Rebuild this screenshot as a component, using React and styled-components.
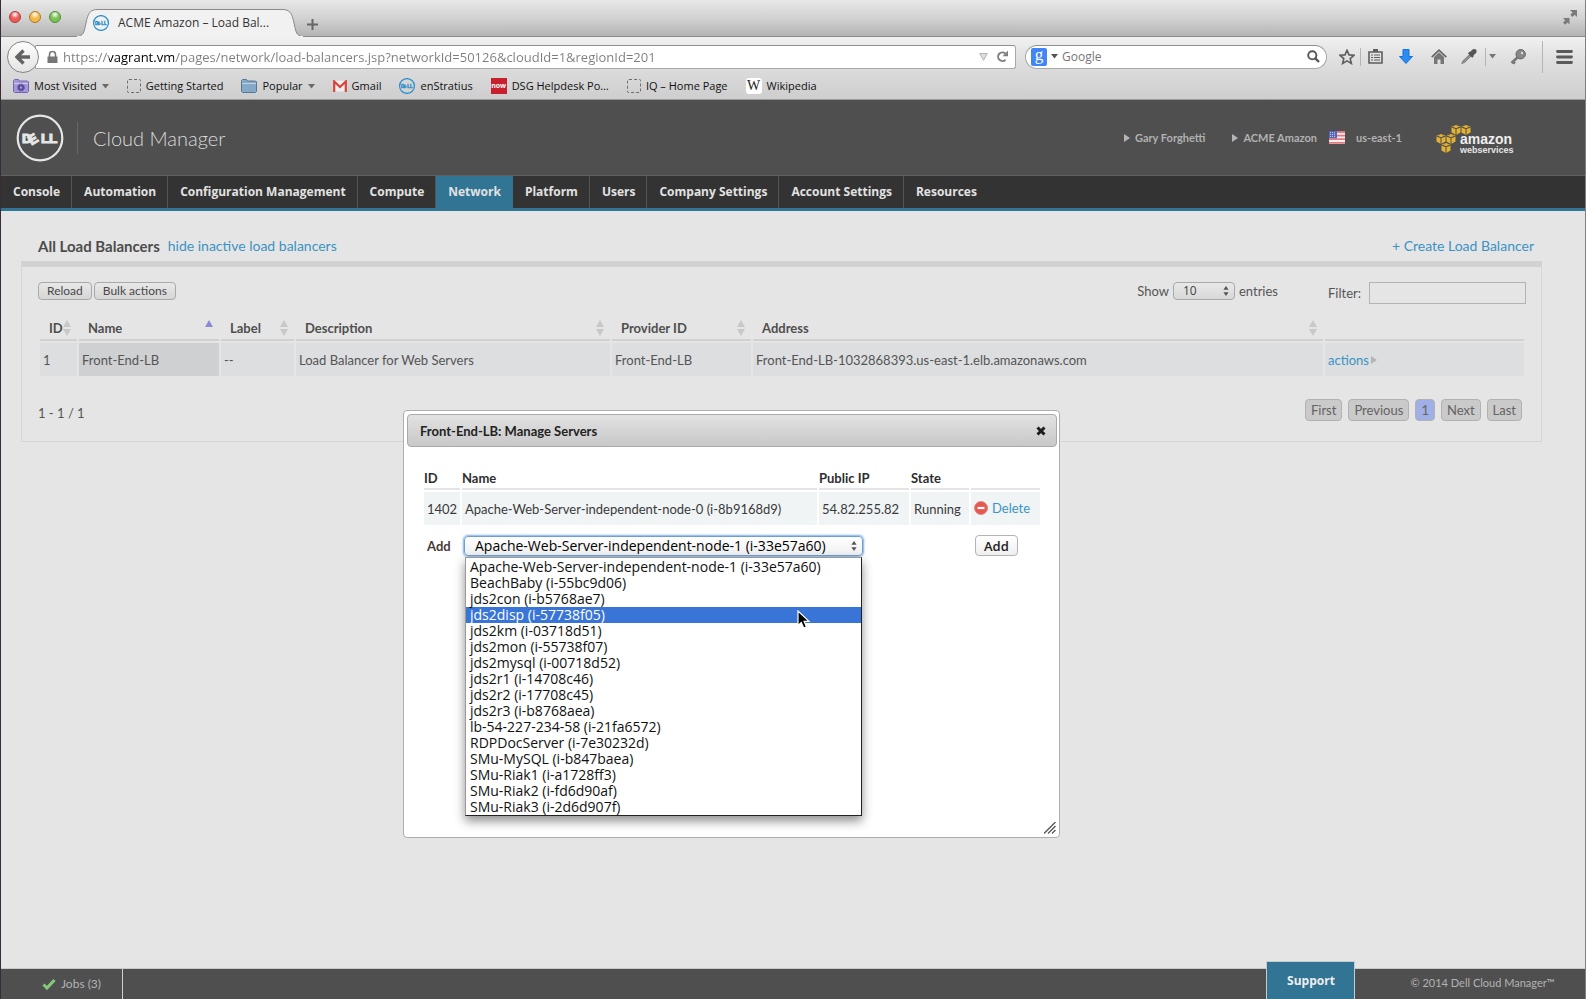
import React from 'react';
import styled, { createGlobalStyle, css } from 'styled-components';

const UI = '"Open Sans", "Noto Sans", sans-serif';
const BODY = 'Lato, "Open Sans", sans-serif';

const GlobalStyle = createGlobalStyle`
  *, *::before, *::after { box-sizing: border-box; }
  body { margin: 0; background: #e5e5e5; font: 13px/18px ${BODY}; color: #555; }
  button, input, select { font: inherit; color: inherit; margin: 0; }
  a { color: #3b93c4; text-decoration: none; }
`;

const Window = styled.div`
  display: flex;
  flex-direction: column;
  min-height: 100vh;
  position: relative;
  border-left: 1px solid #3a2a3a;
  border-right: 1px solid #808080;
`;

/* ---------- browser chrome ---------- */

const TabStrip = styled.header`
  display: flex;
  align-items: flex-end;
  height: 37px;
  background: linear-gradient(#e8e8e8, #d2d2d2 50%, #b4b4b4);
  border-bottom: 1px solid #8a8a8a;
  font-family: ${UI};
`;

const Lights = styled.div`
  display: flex;
  gap: 8px;
  align-self: center;
  padding: 0 15px 3px 8px;
`;

const Light = styled.button`
  width: 12px;
  height: 12px;
  padding: 0;
  border-radius: 50%;
  border: 1px solid ${(p) => p.$edge};
  background: radial-gradient(circle at 50% 25%, #fff 0, ${(p) => p.$fill} 45%, ${(p) => p.$fill} 100%);
`;

const Tab = styled.div`
  display: flex;
  align-items: center;
  gap: 10px;
  position: relative;
  width: 228px;
  height: 28px;
  margin-bottom: -1px;
  padding-left: 17px;
  color: #333;
  font-size: 12px;
`;

const TabShape = styled.svg`
  position: absolute;
  left: 0;
  top: 0;
  z-index: 0;
`;

const TabText = styled.span`
  position: relative;
  display: flex;
  align-items: center;
  gap: 9px;
`;

const IconButton = styled.button`
  display: flex;
  align-items: center;
  justify-content: center;
  padding: 0;
  border: 0;
  background: none;
  width: ${(p) => p.$w || 20}px;
  height: ${(p) => p.$h || 24}px;
`;

const StripEnd = styled.div`
  margin-left: auto;
  align-self: center;
  padding: 0 7px 2px 0;
`;

const Chrome = styled.div`
  background: linear-gradient(#f1f1f1, #e0e0e0 35%, #cecece);
  border-bottom: 1px solid #9b9b9b;
  font-family: ${UI};
  height: 63px;
`;

const AddressRow = styled.form`
  display: flex;
  align-items: center;
  height: 39px;
  padding: 0 4px 0 6px;
`;

const Back = styled.button`
  width: 32px;
  height: 32px;
  flex: none;
  position: relative;
  display: flex;
  align-items: center;
  justify-content: center;
  padding: 0;
  border: 1px solid #858585;
  border-radius: 50%;
  background: linear-gradient(#fdfdfd, #e4e4e4);
`;

const Field = styled.div`
  display: flex;
  align-items: center;
  height: 24px;
  background: #fff;
  border: 1px solid #a9a9a9;
  border-top-color: #8f8f8f;
`;

const UrlField = styled(Field)`
  flex: 1;
  min-width: 0;
  margin-left: -4px;
  padding: 0 4px 0 11px;
  gap: 5px;
  border-radius: 0 3px 3px 0;
`;

const UrlInput = styled.input`
  flex: 1;
  min-width: 0;
  height: 22px;
  border: 0;
  padding: 0;
  outline: 0;
  font-size: 13px;
  color: transparent;
  background: linear-gradient(to right, #7d7d7d 46px, #000 46px, #000 111px, #7d7d7d 111px);
  background-clip: text;
  -webkit-background-clip: text;
`;

const SearchField = styled(Field)`
  width: 302px;
  margin-left: 9px;
  padding: 0 5px;
  gap: 4px;
  border-radius: 12px;
`;

const SearchInput = styled.input`
  flex: 1;
  min-width: 0;
  border: 0;
  padding: 0;
  outline: 0;
  background: none;
  font-size: 12px;
  &::placeholder { color: #777; opacity: 1; }
`;

const GoogleMark = styled.span`
  display: flex;
  align-items: center;
  justify-content: center;
  width: 16px;
  height: 18px;
  border-radius: 2px;
  background: #4285f4;
  color: #fff;
  font: 17px/16px "Liberation Serif", serif;
  padding-bottom: 4px;
`;

const Tools = styled.div`
  display: flex;
  align-items: center;
  margin-left: 9px;
`;

const Divider = styled.span`
  width: 1px;
  height: ${(p) => p.$h || 18}px;
  background: #b5b5b5;
  margin: 0 ${(p) => p.$m || 0}px;
`;

const Bookmarks = styled.nav`
  display: flex;
  align-items: center;
  gap: 18px;
  height: 20px;
  padding-left: 12px;
  font-size: 11px;
  line-height: 16px;
`;

const Bookmark = styled.a`
  display: flex;
  align-items: center;
  gap: 5px;
  color: #111;
  white-space: nowrap;
`;

const SquareMark = styled.span`
  display: flex;
  align-items: center;
  justify-content: center;
  width: 16px;
  height: 16px;
  border-radius: ${(p) => p.$r || 0}px;
  background: ${(p) => p.$bg};
  color: ${(p) => p.$fg};
  font: ${(p) => p.$font};
`;

const Dashed = styled.span`
  width: 14px;
  height: 14px;
  border: 1px dashed #6d6d6d;
  border-radius: 2px;
`;

/* ---------- application ---------- */

const Banner = styled.div`
  display: flex;
  align-items: center;
  height: 75px;
  background: #4f4f4f;
  padding: 0 71px 0 15px;
`;

const Product = styled.h1`
  margin: 0 0 0 13px;
  padding-left: 15px;
  border-left: 1px solid #686868;
  font: 300 20px/32px ${BODY};
  color: #dcdcdc;
`;

const Account = styled.div`
  display: flex;
  align-items: center;
  margin-left: auto;
  font-weight: 700;
  font-size: 11px;
`;

const AccountLink = styled.a`
  display: flex;
  align-items: center;
  gap: ${(p) => p.$inner || 5}px;
  color: #b1b1b1;
  margin-right: ${(p) => p.$gap}px;
  svg { flex: none; }
`;

const MainNav = styled.nav`
  display: flex;
  height: 36px;
  background: #333;
  border-top: 1px solid #606060;
  border-bottom: 3px solid #327494;
`;

const NavItem = styled.a`
  display: flex;
  align-items: center;
  padding: 0 11px 0 12px;
  border-right: 1px solid #555;
  font: 700 12px/18px ${UI};
  color: #e2e2e2;
  white-space: nowrap;
  ${(p) => p.$active && css`background: #327494; border-color: #327494;`}
  &:last-child { border-right: 0; }
`;

const Main = styled.main`
  flex: 1;
  padding: 22px 43px 0 20px;
`;

const Heading = styled.div`
  display: flex;
  align-items: center;
  gap: 8px;
  height: 28px;
  padding: 0 8px 2px 17px;
  font-size: 14px;
`;

const Title = styled.h2`
  margin: 0;
  font-size: 15px;
  line-height: 18px;
  color: #4c4c4c;
`;

const CreateLink = styled.a`
  margin-left: auto;
`;

const Panel = styled.section`
  border: 1px solid #d6d6d6;
  border-top: 6px solid #d2d2d2;
  padding: 15px 15px 20px 16px;
`;

const Toolbar = styled.div`
  display: flex;
  align-items: flex-start;
  height: 22px;
  gap: 2px;
`;

const Button = styled.button`
  height: ${(p) => p.$h || 18}px;
  padding: 0 8px;
  border: 1px solid ${(p) => (p.$light ? '#b3b3b3' : '#a9a9a9')};
  border-radius: 4px;
  background: ${(p) => (p.$light ? 'linear-gradient(#fff, #efefef)' : 'linear-gradient(#e8e8e8, #d6d6d6)')};
  color: ${(p) => (p.$light ? '#222' : '#484848')};
  font-size: ${(p) => (p.$light ? 13 : 12)}px;
  line-height: 16px;
  ${(p) => p.$light && css`font-family: ${UI}; font-weight: 600;`}
`;

const Entries = styled.label`
  display: flex;
  align-items: center;
  gap: 4px;
  margin-left: auto;
  margin-right: 48px;
`;

const Filter = styled.label`
  display: flex;
  align-items: center;
  gap: 8px;
  input {
    width: 157px;
    height: 22px;
    border: 1px solid #b3b3b3;
    background: #e5e5e5;
    padding: 0 4px;
  }
`;

const SelectBox = styled.span`
  position: relative;
  display: block;
  width: ${(p) => p.$w}px;
  select {
    display: block;
    width: 100%;
    height: ${(p) => (p.$focus ? 20 : 18)}px;
    appearance: none;
    outline: 0;
    padding: 0 16px 0 ${(p) => (p.$focus ? 10 : 9)}px;
    font-family: ${UI};
    font-weight: 400;
    font-size: ${(p) => (p.$focus ? 14 : 12)}px;
    line-height: 16px;
    border: 1px solid ${(p) => (p.$focus ? '#6f9fd0' : '#a9a9a9')};
    border-radius: 4px;
    background: ${(p) => (p.$focus ? 'linear-gradient(#fff, #f0f0f0)' : 'linear-gradient(#e8e8e8, #d8d8d8)')};
    color: ${(p) => (p.$focus ? '#000' : '#444')};
    ${(p) => p.$focus && css`box-shadow: 0 0 2px 1px #7fb0e0;`}
  }
`;

const SelectArrows = styled.svg`
  position: absolute;
  right: 6px;
  top: 50%;
  margin-top: -5px;
  pointer-events: none;
`;

const Grid = styled.table`
  width: 100%;
  table-layout: fixed;
  border-collapse: separate;
  border-spacing: 2px;
  margin: ${(p) => p.$margin || '0'};
`;

const Th = styled.th`
  height: ${(p) => p.$h || 25}px;
  padding: 0 6px 0 ${(p) => (p.$pad === undefined ? 9 : p.$pad)}px;
  border-bottom: 2px solid ${(p) => p.$line || '#d0d1d2'};
  text-align: left;
  color: ${(p) => p.$ink || '#4f4f4f'};
`;

const HeadInner = styled.span`
  display: flex;
  align-items: center;
  justify-content: space-between;
`;

const Td = styled.td`
  height: 33px;
  padding: 0 3px;
  background: ${(p) => p.$bg || '#dcdee0'};
  color: ${(p) => p.$ink || '#555'};
  white-space: nowrap;
`;

const ActionLink = styled.a`
  display: inline-flex;
  align-items: center;
  gap: ${(p) => p.$gap || 2}px;
`;

const TableFoot = styled.div`
  display: flex;
  align-items: center;
  justify-content: space-between;
  margin-top: 21px;
  height: 22px;
  padding-right: 4px;
`;

const Count = styled.span`
  padding-top: 6px;
`;

const Pages = styled.div`
  display: flex;
  gap: 6px;
`;

const PageButton = styled.button`
  height: 22px;
  padding: 0 5px;
  border: 1px solid #b2b2b2;
  border-radius: 4px;
  background: ${(p) => (p.$current ? '#a0afe6' : '#cacaca')};
  color: #636363;
  line-height: 18px;
`;

/* ---------- dialog ---------- */

const Dialog = styled.section`
  position: absolute;
  top: 410px;
  left: 402px;
  width: 657px;
  min-height: 428px;
  padding: 3px 2px 3px 3px;
  background: #fff;
  border: 1px solid #aeaeae;
  border-radius: 4px;
`;

const DialogBar = styled.div`
  display: flex;
  align-items: center;
  justify-content: space-between;
  height: 33px;
  padding: 0 9px 0 12px;
  border: 1px solid #aaa;
  border-radius: 4px;
  background: linear-gradient(#e2e2e2, #c8c8c8);
  h3 { margin: 0; font-size: 13px; line-height: 18px; color: #222; }
`;

const DialogBody = styled.div`
  padding: 19px 15px 0;
`;

const AddCell = styled.td`
  height: 37px;
  padding: 0 ${(p) => p.$pad}px;
  font-weight: 700;
  color: #4a3a34;
`;

const Menu = styled.ul`
  position: absolute;
  top: 21px;
  left: 1px;
  width: 397px;
  margin: 0;
  padding: 1px 0 0;
  list-style: none;
  background: #fff;
  border: 1px solid #222;
  border-left-color: #999;
  border-top-color: #999;
  box-shadow: 0 5px 10px rgba(0, 0, 0, 0.45);
  font: 400 14px/16px ${UI};
  color: #111;
  z-index: 2;
`;

const Option = styled.li`
  padding-left: 4px;
  ${(p) => p.$on && css`background: #3875d7; color: #fff;`}
`;

const Pointer = styled.svg`
  position: absolute;
  top: 74px;
  left: 333px;
  z-index: 3;
`;

const Grip = styled.svg`
  position: absolute;
  right: 3px;
  bottom: 3px;
`;

/* ---------- footer ---------- */

const Footer = styled.footer`
  display: flex;
  align-items: center;
  height: 31px;
  background: #4f4f4f;
  border-top: 1px solid #c9c9c9;
  font-size: 11px;
  color: #b3b3b3;
`;

const Jobs = styled.a`
  display: flex;
  align-items: center;
  gap: 5px;
  width: 122px;
  height: 30px;
  padding-left: 41px;
  border-right: 1px solid #d0d0d0;
  color: #b3b3b3;
  font-size: 12px;
`;

const Support = styled.button`
  align-self: flex-end;
  width: 89px;
  height: 38px;
  margin-left: auto;
  margin-right: 55px;
  border: 1px solid #c6cdd0;
  border-bottom: 0;
  background: #327494;
  color: #eee;
  font: 700 12px/18px ${UI};
`;

const Copyright = styled.span`
  margin-right: 30px;
  padding-bottom: 3px;
`;

/* ---------- drawings ---------- */

const DellRing = ({ size, color }) => (
  <svg width={size} height={size} viewBox="0 0 48 48" aria-hidden="true">
    <circle cx="24" cy="24" r="22.3" fill="none" stroke={color} strokeWidth={size > 20 ? 2.2 : 3.6} />
    <text
      x="6 15.5 25 33"
      y="29 31.5 29 29"
      rotate="0 -32 0 0"
      fill={color}
      stroke={color}
      strokeWidth="1.2"
      fontFamily="Liberation Sans"
      fontWeight="700"
      fontSize="13.5"
    >
      DELL
    </text>
  </svg>
);

const Caret = ({ color = '#6a6a6a', w = 7 }) => (
  <svg width={w} height="5" viewBox="0 0 7 5" aria-hidden="true"><path d="M0 0h7L3.5 4.5z" fill={color} /></svg>
);

const Play = ({ color = '#b5b5b5', h = 8 }) => (
  <svg width="6" height={h} viewBox="0 0 6 8" aria-hidden="true"><path d="M0 0l6 4-6 4z" fill={color} /></svg>
);

const Sort = ({ up }) => (
  <svg width="8" height="16" viewBox="0 0 8 16" aria-hidden="true">
    <path d="M4 0l4 7H0z" fill={up ? '#8a8ad6' : '#c8c8c8'} />
    {!up && <path d="M0 9h8l-4 7z" fill="#c8c8c8" />}
  </svg>
);

const Arrows = ({ color = '#555' }) => (
  <SelectArrows width="6" height="10" viewBox="0 0 6 10" aria-hidden="true">
    <path d="M3 0l2.6 3.8H.4zM.4 6.2h5.2L3 10z" fill={color} />
  </SelectArrows>
);

const Folder = ({ fill, edge, gear }) => (
  <svg width="16" height="14" viewBox="0 0 16 14" aria-hidden="true">
    <path d="M.5 2.5v-1l1-1h4l1 1.5h8l1 1v9.5l-1 1h-13l-1-1z" fill={fill} stroke={edge} />
    <path d="M1 4.5h14" stroke="#fff" strokeOpacity=".5" />
    {gear && <circle cx="8" cy="8.5" r="2.2" fill="none" stroke="#5b4a9d" strokeWidth="2" />}
    {gear && <circle cx="8" cy="8.5" r="3.6" fill="none" stroke="#5b4a9d" strokeDasharray="1.4 1.4" />}
  </svg>
);

const Gmail = () => (
  <svg width="14" height="12" viewBox="0 0 14 12" aria-hidden="true">
    <path d="M1 .5h12v11H1z" fill="#eee" stroke="#ddd" />
    <path d="M1.2 12V1.5L7 7l5.8-5.5V12" fill="none" stroke="#d9443a" strokeWidth="2.2" />
  </svg>
);

const Flag = () => (
  <svg width="16" height="13" viewBox="0 0 16 13" aria-hidden="true">
    <path d="M0 0h16v13H0z" fill="#eee" />
    <path d="M0 1h16M0 4.6h16M0 8.200h16M0 11.800h16" stroke="#e27a80" strokeWidth="1.800" />
    <path d="M0 0h8v7.300H0z" fill="#5566b8" />
    <path d="M1 1.700h6M1 3.600h6M1 5.500h6" stroke="#cfd6f5" strokeWidth=".9" strokeDasharray="1 1" />
  </svg>
);

const Cube = ({ x, y }) => (
  <g transform={`translate(${x} ${y})`}>
    <path d="M5 0l4.500 1.700v5.800L5 10 .5 7.500V1.700z" fill="#e3b235" />
    <path d="M.5 2.200L5 3.600l4.500-1.400M5 3.600V10" fill="none" stroke="#4f4f4f" strokeWidth="1" />
    <path d="M2.800 1.400v2M7.200 1.400v2" stroke="#4f4f4f" strokeWidth=".5" />
  </g>
);

const Aws = () => (
  <svg width="78" height="34" viewBox="0 -4 78 34" role="img" aria-label="Amazon Web Services">
    <Cube x={15} y={0} />
    <Cube x={25} y={0} />
    <Cube x={0} y={9} />
    <Cube x={10} y={9} />
    <Cube x={5} y={18} />
    <text x="24" y="19" fill="#eee" fontFamily="Liberation Sans" fontWeight="700" fontSize="14">amazon</text>
    <text x="24" y="28" fill="#e6e6e6" fontFamily="Liberation Sans" fontSize="9">webservices</text>
  </svg>
);

const servers = [
  'Apache-Web-Server-independent-node-1 (i-33e57a60)',
  'BeachBaby (i-55bc9d06)',
  'jds2con (i-b5768ae7)',
  'jds2disp (i-57738f05)',
  'jds2km (i-03718d51)',
  'jds2mon (i-55738f07)',
  'jds2mysql (i-00718d52)',
  'jds2r1 (i-14708c46)',
  'jds2r2 (i-17708c45)',
  'jds2r3 (i-b8768aea)',
  'lb-54-227-234-58 (i-21fa6572)',
  'RDPDocServer (i-7e30232d)',
  'SMu-MySQL (i-b847baea)',
  'SMu-Riak1 (i-a1728ff3)',
  'SMu-Riak2 (i-fd6d90af)',
  'SMu-Riak3 (i-2d6d907f)',
];

const sections = ['Console', 'Automation', 'Configuration Management', 'Compute', 'Network', 'Platform', 'Users', 'Company Settings', 'Account Settings', 'Resources'];

const columns = [
  { label: 'ID', w: 37 },
  { label: 'Name', w: 140, up: true },
  { label: 'Label', w: 73 },
  { label: 'Description', w: 314 },
  { label: 'Provider ID', w: 139 },
  { label: 'Address' },
  { label: '', w: 199, plain: true },
];

function BrowserChrome() {
  return (
    <>
      <TabStrip>
        <Lights>
          <Light aria-label="Close window" $fill="#ee5a55" $edge="#a83c38" />
          <Light aria-label="Minimize" $fill="#f5b945" $edge="#a97a28" />
          <Light aria-label="Zoom" $fill="#7cc255" $edge="#4f8a35" />
        </Lights>
        <Tab>
          <TabShape width="228" height="28" viewBox="0 0 228 28" aria-hidden="true">
            <path d="M0 28C8 27 8 23 10 14C12 4 14 .5 22 .5H206C214 .5 216 4 218 14C220 23 220 27 228 28z" fill="#f1f1f1" stroke="#8a8a8a" />
            <path d="M1 28h226" stroke="#f1f1f1" strokeWidth="2" />
          </TabShape>
          <TabText><DellRing size={16} color="#2c8fcc" />ACME Amazon – Load Bal...</TabText>
        </Tab>
        <IconButton aria-label="New tab" $w={16} $h={24}>
          <svg width="11" height="11" viewBox="0 0 11 11"><path d="M5.500 0v11M0 5.500h11" stroke="#666" strokeWidth="2" /></svg>
        </IconButton>
        <StripEnd>
          <IconButton aria-label="Full screen" $w={16} $h={18}>
            <svg width="14" height="15" viewBox="0 0 14 15" fill="#7a7a7a">
              <path d="M7 0h7v7l-2.300-2.300-2.200 2.200-2.200-2.200 2.200-2.200z" />
              <path d="M0 8h6.500v6.500l-2-2L2.200 14.800 0 12.600l2.200-2.300z" />
            </svg>
          </IconButton>
        </StripEnd>
      </TabStrip>
      <Chrome>
        <AddressRow onSubmit={(e) => e.preventDefault()}>
          <Back type="button" aria-label="Back">
            <svg width="16" height="16" viewBox="0 0 16 16"><path d="M8.500 1.500L2 8l6.500 6.500M2.500 8H15" fill="none" stroke="#636363" strokeWidth="3.400" /></svg>
          </Back>
          <UrlField>
            <svg width="11" height="12" viewBox="0 0 11 12" aria-hidden="true">
              <path d="M2.500 6V3.500a3 3 0 016 0V6" fill="none" stroke="#777" strokeWidth="1.600" />
              <path d="M.5 5.500h10V12H.5z" fill="#777" />
            </svg>
            <UrlInput aria-label="Address" defaultValue="https://vagrant.vm/pages/network/load-balancers.jsp?networkId=50126&cloudId=1&regionId=201" />
            <svg width="9" height="8" viewBox="0 0 9 8" aria-hidden="true"><path d="M.7.5h7.600L4.500 7.300z" fill="#ddd" stroke="#b5b5b5" /></svg>
            <IconButton type="button" aria-label="Reload page" $w={18}>
              <svg width="13" height="13" viewBox="0 0 13 13">
                <path d="M9.500 9.700A4.300 4.300 0 119.300 3.500" fill="none" stroke="#808080" strokeWidth="2" />
                <path d="M12 .5v5.700H6.500z" fill="#808080" />
              </svg>
            </IconButton>
          </UrlField>
          <SearchField>
            <GoogleMark aria-hidden="true">g</GoogleMark>
            <Caret color="#555" w={7} />
            <SearchInput aria-label="Search" placeholder="Google" />
            <IconButton aria-label="Go" $w={16}>
              <svg width="13" height="13" viewBox="0 0 13 13"><circle cx="5.300" cy="5.300" r="4.100" fill="none" stroke="#555" strokeWidth="1.900" /><path d="M8.300 8.300L12 12" stroke="#555" strokeWidth="2.400" /></svg>
            </IconButton>
          </SearchField>
          <Tools>
            <IconButton type="button" aria-label="Bookmark this page" $w={22}>
              <svg width="16" height="16" viewBox="0 0 16 16"><path d="M8 1.300l2 4.600 5 .4-3.800 3.300 1.200 4.900L8 11.900l-4.400 2.600 1.200-4.900L1 6.300l5-.4z" fill="none" stroke="#5e5e5e" strokeWidth="1.600" /></svg>
            </IconButton>
            <Divider $m={2} />
            <IconButton type="button" aria-label="Bookmarks" $w={24}>
              <svg width="15" height="15" viewBox="0 0 15 15" fill="none" stroke="#5e5e5e">
                <path d="M1 3h13v11H1z" strokeWidth="1.600" />
                <path d="M5 0h5v3H5z" fill="#5e5e5e" stroke="none" />
                <path d="M3 6h2M6 6h6M3 8.500h2M6 8.500h6M3 11h2M6 11h6" strokeWidth="1.200" />
              </svg>
            </IconButton>
            <IconButton type="button" aria-label="Downloads" $w={38}>
              <svg width="14" height="15" viewBox="0 0 14 15"><path d="M4 .5h6v7h3.500L7 14.500.5 7.500H4z" fill="#2a8df5" stroke="#1a6fd0" /></svg>
            </IconButton>
            <IconButton type="button" aria-label="Home" $w={28}>
              <svg width="16" height="15" viewBox="0 0 16 15"><path d="M.7 8.200L8 1.200l7.300 7" fill="none" stroke="#666" strokeWidth="1.700" /><path d="M3 8l5-4.700L13 8v7H9.500v-4.500h-3V15H3z" fill="#777" /></svg>
            </IconButton>
            <IconButton type="button" aria-label="Colour picker" $w={32}>
              <svg width="16" height="15" viewBox="0 0 16 15"><path d="M9 5.500L2 12.300l-.8 1.800 1.900-.6 7-6.700z" fill="#ddd" stroke="#777" strokeWidth="1.200" /><path d="M8 3l1.500-.5L11 1c1.500-1.500 4-1 4.500.5S15 4.500 14 5l-1.300 1-.3 1.700-1.200 1.100L7 4.500z" fill="#555" /></svg>
            </IconButton>
            <Divider />
            <IconButton type="button" aria-label="Colour picker menu" $w={12}><Caret color="#777" w={7} /></IconButton>
            <IconButton type="button" aria-label="Passwords" $w={40}>
              <svg width="16" height="16" viewBox="0 0 16 16"><circle cx="10.700" cy="5.200" r="4.700" fill="#888" stroke="#666" /><circle cx="12" cy="4" r="1.200" fill="#ddd" /><path d="M8 8l-6.500 6M3 13l2 1.500" stroke="#777" strokeWidth="2.600" /></svg>
            </IconButton>
            <Divider $h={32} $m={4} />
            <IconButton type="button" aria-label="Menu" $w={34}>
              <svg width="17" height="14" viewBox="0 0 17 14"><path d="M1.500 1.500h14M1.500 7h14M1.500 12.500h14" stroke="#5a5a5a" strokeWidth="2.800" strokeLinecap="round" /></svg>
            </IconButton>
          </Tools>
        </AddressRow>
        <Bookmarks aria-label="Bookmarks">
          <Bookmark href="#"><Folder fill="#a598d8" edge="#7466b0" gear />Most Visited<Caret /></Bookmark>
          <Bookmark href="#"><Dashed />Getting Started</Bookmark>
          <Bookmark href="#"><Folder fill="#86a9c8" edge="#55789a" />Popular<Caret /></Bookmark>
          <Bookmark href="#"><Gmail />Gmail</Bookmark>
          <Bookmark href="#"><DellRing size={16} color="#2c8fcc" />enStratius</Bookmark>
          <Bookmark href="#"><SquareMark $bg="#c9202e" $fg="#fff" $font={`700 7px/8px ${UI}`}>now</SquareMark>DSG Helpdesk Po…</Bookmark>
          <Bookmark href="#"><Dashed />IQ – Home Page</Bookmark>
          <Bookmark href="#"><SquareMark $r={3} $bg="#fff" $fg="#222" $font={'14px/16px "Liberation Serif", serif'}>W</SquareMark>Wikipedia</Bookmark>
        </Bookmarks>
      </Chrome>
    </>
  );
}

function ManageServers() {
  const cell = { $bg: '#f0f4f5', $ink: '#3a3a3a' };
  const head = { $h: 22, $pad: 0, $line: '#e2e4e5', $ink: '#2e2e2e' };
  return (
    <Dialog role="dialog" aria-labelledby="dialog-title">
      <DialogBar>
        <h3 id="dialog-title">Front-End-LB: Manage Servers</h3>
        <IconButton aria-label="Close" $w={12} $h={16}>
          <svg width="10" height="10" viewBox="0 0 10 10"><path d="M1.500 1.500l7 7M8.500 1.500l-7 7" stroke="#1c1c1c" strokeWidth="3" /></svg>
        </IconButton>
      </DialogBar>
      <DialogBody>
        <Grid>
          <colgroup>
            <col style={{ width: 36 }} /><col /><col style={{ width: 90 }} /><col style={{ width: 58 }} /><col style={{ width: 69 }} />
          </colgroup>
          <thead>
            <tr><Th {...head}>ID</Th><Th {...head}>Name</Th><Th {...head}>Public IP</Th><Th {...head}>State</Th><Th {...head} aria-label="Action" /></tr>
          </thead>
          <tbody>
            <tr>
              <Td {...cell}>1402</Td>
              <Td {...cell}>Apache-Web-Server-independent-node-0 (i-8b9168d9)</Td>
              <Td {...cell}>54.82.255.82</Td>
              <Td {...cell}>Running</Td>
              <Td {...cell}>
                <ActionLink href="#" $gap={4}>
                  <svg width="14" height="14" viewBox="0 0 14 14" aria-hidden="true"><circle cx="7" cy="7" r="6.500" fill="#e8564e" stroke="#d98a86" /><path d="M3.500 7h7" stroke="#fff" strokeWidth="2.200" /></svg>
                  Delete
                </ActionLink>
              </Td>
            </tr>
            <tr>
              <AddCell $pad={3}><label htmlFor="server">Add</label></AddCell>
              <AddCell $pad={2} colSpan={3}>
                <SelectBox $w={399} $focus>
                  <select id="server" defaultValue={servers[0]}>
                    {servers.map((s) => <option key={s}>{s}</option>)}
                  </select>
                  <Arrows />
                  <Menu role="listbox" aria-label="Servers">
                    {servers.map((s, i) => <Option key={s} role="option" aria-selected={i === 3} $on={i === 3}>{s}</Option>)}
                  </Menu>
                  <Pointer width="14" height="20" viewBox="0 0 14 20" aria-hidden="true">
                    <path d="M1 1v14.500l3.300-3 2.400 5.600 2.800-1.200-2.400-5.500H12z" fill="#000" stroke="#fff" strokeWidth="1.200" />
                  </Pointer>
                </SelectBox>
              </AddCell>
              <AddCell $pad={4}><Button $light $h={21}>Add</Button></AddCell>
            </tr>
          </tbody>
        </Grid>
      </DialogBody>
      <Grip width="12" height="12" viewBox="0 0 12 12" aria-hidden="true"><path d="M0 11.500L11.500 0M4 11.500L11.500 4M8 11.500l3.500-3.500" stroke="#555" strokeWidth="1.300" /></Grip>
    </Dialog>
  );
}

export default function App() {
  return (
    <>
      <GlobalStyle />
      <Window>
        <BrowserChrome />
        <Banner>
          <DellRing size={48} color="#e6e6e6" />
          <Product>Cloud Manager</Product>
          <Account>
            <AccountLink href="#" $gap={27}><Play />Gary Forghetti</AccountLink>
            <AccountLink href="#" $gap={12}><Play />ACME Amazon</AccountLink>
            <AccountLink href="#" $gap={34} $inner={11}><Flag />us-east-1</AccountLink>
            <Aws />
          </Account>
        </Banner>
        <MainNav aria-label="Sections">
          {sections.map((s) => <NavItem key={s} href="#" $active={s === 'Network'}>{s}</NavItem>)}
        </MainNav>
        <Main>
          <Heading>
            <Title>All Load Balancers</Title>
            <a href="#">hide inactive load balancers</a>
            <CreateLink href="#">+ Create Load Balancer</CreateLink>
          </Heading>
          <Panel>
            <Toolbar>
              <Button>Reload</Button>
              <Button>Bulk actions</Button>
              <Entries>
                Show
                <SelectBox $w={62}>
                  <select defaultValue="10"><option>10</option><option>25</option></select>
                  <Arrows />
                </SelectBox>
                entries
              </Entries>
              <Filter>Filter: <input type="text" /></Filter>
            </Toolbar>
            <Grid $margin="10px 0 0">
              <colgroup>{columns.map((c, i) => <col key={i} style={c.w ? { width: c.w } : undefined} />)}</colgroup>
              <thead>
                <tr>
                  {columns.map((c) => (
                    <Th key={c.label} scope="col">
                      {!c.plain && <HeadInner>{c.label}<Sort up={c.up} /></HeadInner>}
                    </Th>
                  ))}
                </tr>
              </thead>
              <tbody>
                <tr>
                  <Td>1</Td>
                  <Td $bg="#cfd0d2">Front-End-LB</Td>
                  <Td>--</Td>
                  <Td>Load Balancer for Web Servers</Td>
                  <Td>Front-End-LB</Td>
                  <Td>Front-End-LB-1032868393.us-east-1.elb.amazonaws.com</Td>
                  <Td><ActionLink href="#">actions<Play h={8} /></ActionLink></Td>
                </tr>
              </tbody>
            </Grid>
            <TableFoot>
              <Count>1 - 1 / 1</Count>
              <Pages>
                <PageButton>First</PageButton>
                <PageButton>Previous</PageButton>
                <PageButton $current aria-current="page">1</PageButton>
                <PageButton>Next</PageButton>
                <PageButton>Last</PageButton>
              </Pages>
            </TableFoot>
          </Panel>
        </Main>
        <Footer>
          <Jobs href="#">
            <svg width="14" height="12" viewBox="0 0 14 12" aria-hidden="true"><path d="M1.500 6.500l3.500 3.500L12.500 2" fill="none" stroke="#86c97c" strokeWidth="3" /></svg>
            Jobs (3)
          </Jobs>
          <Support>Support</Support>
          <Copyright>© 2014 Dell Cloud Manager™</Copyright>
        </Footer>
        <ManageServers />
      </Window>
    </>
  );
}
